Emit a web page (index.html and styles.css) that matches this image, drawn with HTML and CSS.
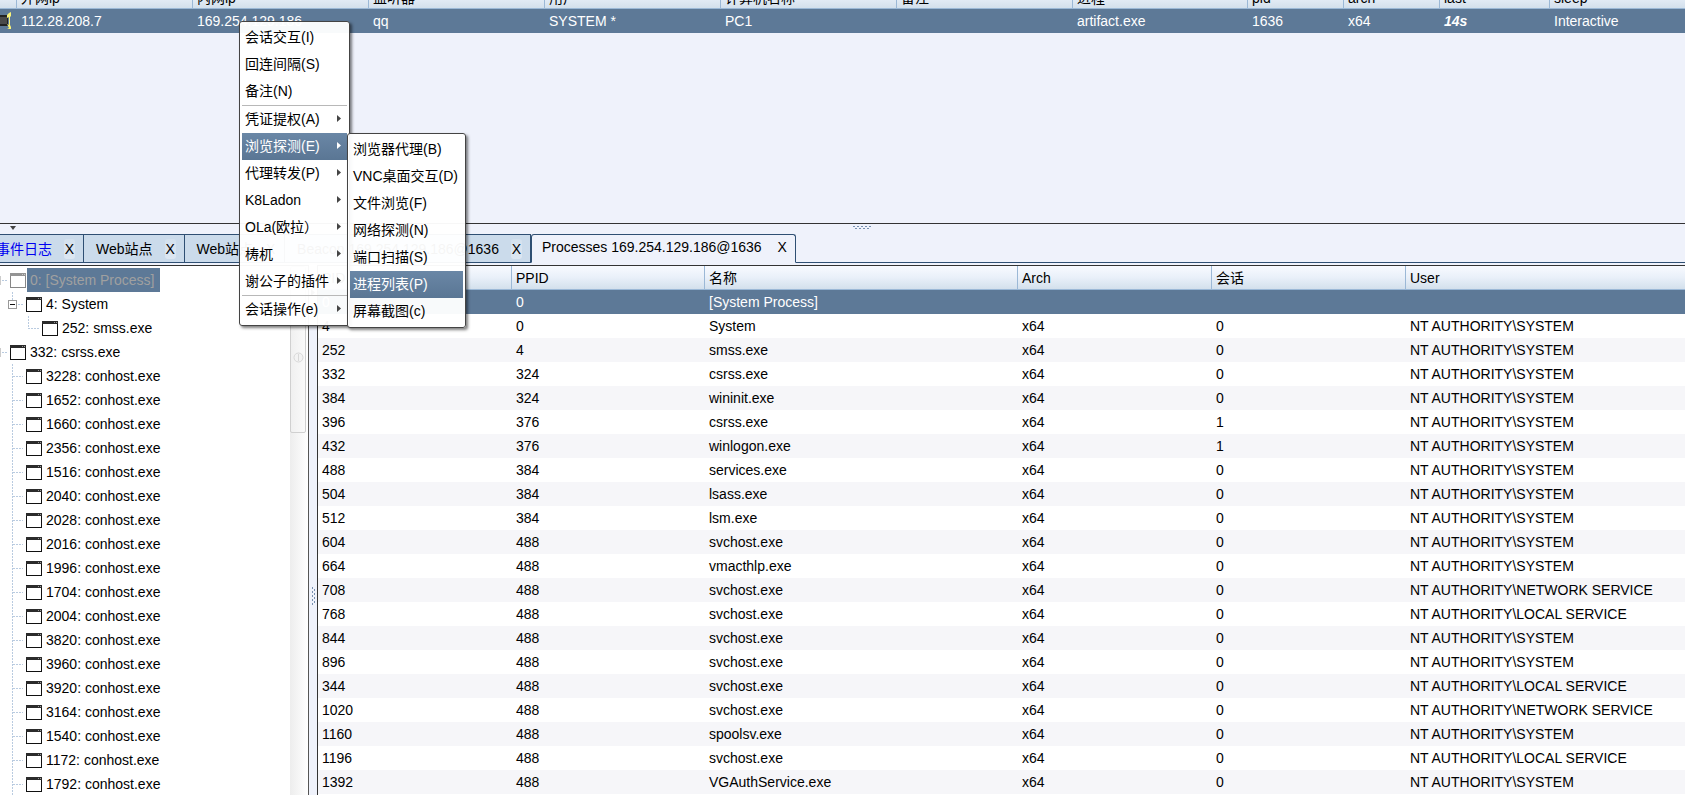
FILE: index.html
```html
<!DOCTYPE html>
<html lang="zh-CN">
<head>
<meta charset="utf-8">
<title>Processes 169.254.129.186@1636</title>
<link rel="stylesheet" href="styles.css">
</head>
<body>
<svg class="defs" aria-hidden="true">
  <symbol id="win" viewBox="0 0 16 15"><rect x=".5" y=".5" width="15" height="14" fill="#fff" stroke="#111"/><path d="M0 0h16v3H0z" fill="#2b2b2b"/><path d="M12 1h1v1h-1zM14 1h1v1h-1z" fill="#999"/></symbol>
  <symbol id="g0" viewBox="0 0 10 24"><path d="M0 8v9" stroke="#999" fill="none"/><path d="M2 12.5h6" stroke="#b9cbe0" stroke-dasharray="2 1" fill="none"/></symbol>
  <symbol id="g1e" viewBox="0 0 26 24"><path d="M12.5 0v8M18 12.5h6" stroke="#b9cbe0" stroke-dasharray="2 1" fill="none"/><rect x="8.500" y="8.500" width="8" height="8" fill="#fff" stroke="#999"/><path d="M10 12.500h5" stroke="#111"/></symbol>
  <symbol id="g1" viewBox="0 0 26 24"><path d="M12.500 0v24M13 12.500h10" stroke="#b9cbe0" stroke-dasharray="2 1" fill="none"/></symbol>
  <symbol id="g2" viewBox="0 0 42 24"><path d="M28.500 0v12M28 12.500h11" stroke="#b9cbe0" stroke-dasharray="2 1" fill="none"/></symbol>
  <symbol id="arr" viewBox="0 0 4 7"><path d="M0 0l4 3.500L0 7z" fill="currentColor"/></symbol>
</svg>

<main class="app">
  <section class="sessions">
    <table class="grid session-grid">
      <colgroup><col class="s-icon"><col class="s-wide"><col class="s-wide"><col class="s-wide"><col class="s-wide"><col class="s-wide"><col class="s-wide"><col class="s-proc"><col class="s-slim"><col class="s-slim"><col class="s-last"><col></colgroup>
      <thead><tr><th></th><th>外网ip</th><th>内网ip</th><th>监听器</th><th>用户</th><th>计算机名称</th><th>备注</th><th>进程</th><th>pid</th><th>arch</th><th>last</th><th>sleep</th></tr></thead>
      <tbody><tr class="selected"><td class="os"><svg width="12" height="18" viewBox="0 0 12 18" aria-hidden="true"><path d="M0 3h8v11H0z" fill="#222"/><path d="M0 5h7v7H0z" fill="#4a4a4a"/><path d="M11 0v4L9 6V5L7 6V3l2-2z" fill="#f8f27a"/><path d="M9 5h1v8H9z" fill="#f8f27a"/><path d="M7 12l2 1h1l1 2v2H7l2-1z" fill="#f8f27a"/></svg></td><td>112.28.208.7</td><td>169.254.129.186</td><td>qq</td><td>SYSTEM *</td><td>PC1</td><td></td><td>artifact.exe</td><td>1636</td><td>x64</td><td class="last">14s</td><td>Interactive</td></tr></tbody>
    </table>
  </section>

  <div class="split-h">
    <svg class="collapse" width="6" height="4" viewBox="0 0 6 4" aria-hidden="true"><path d="M0 0h6L3 4z" fill="#444"/></svg>
    <svg class="grip" width="18" height="3" viewBox="0 0 18 3" aria-hidden="true"><path d="M0 .5h18" stroke="#7790b0" stroke-dasharray="2 2"/><path d="M2 2.500h15" stroke="#7790b0" stroke-dasharray="2 2"/></svg>
  </div>

  <nav class="tabs">
    <div class="tab first"><button class="name blue">事件日志</button><button class="close">X</button></div>
    <div class="tab"><button class="name">Web站点</button><button class="close">X</button></div>
    <div class="tab"><button class="name">Web站点</button><button class="close">X</button></div>
    <div class="tab"><button class="name">Beacon 169.254.129.186@1636</button><button class="close">X</button></div>
    <div class="tab active"><button class="name">Processes 169.254.129.186@1636</button><button class="close">X</button></div>
    <div class="rest"></div>
  </nav>

  <section class="work">
    <div class="tree-pane">
      <ul class="tree">
        <li class="dim"><svg width="10" height="24"><use href="#g0"/></svg><svg class="win" width="16" height="15"><use href="#win"/></svg><span class="picked">0: [System Process]</span></li>
        <li><svg width="26" height="24"><use href="#g1e"/></svg><svg class="win" width="16" height="15"><use href="#win"/></svg><span>4: System</span></li>
        <li><svg width="42" height="24"><use href="#g2"/></svg><svg class="win" width="16" height="15"><use href="#win"/></svg><span>252: smss.exe</span></li>
        <li><svg width="10" height="24"><use href="#g0"/></svg><svg class="win" width="16" height="15"><use href="#win"/></svg><span>332: csrss.exe</span></li>
        <li><svg width="26" height="24"><use href="#g1"/></svg><svg class="win" width="16" height="15"><use href="#win"/></svg><span>3228: conhost.exe</span></li>
        <li><svg width="26" height="24"><use href="#g1"/></svg><svg class="win" width="16" height="15"><use href="#win"/></svg><span>1652: conhost.exe</span></li>
        <li><svg width="26" height="24"><use href="#g1"/></svg><svg class="win" width="16" height="15"><use href="#win"/></svg><span>1660: conhost.exe</span></li>
        <li><svg width="26" height="24"><use href="#g1"/></svg><svg class="win" width="16" height="15"><use href="#win"/></svg><span>2356: conhost.exe</span></li>
        <li><svg width="26" height="24"><use href="#g1"/></svg><svg class="win" width="16" height="15"><use href="#win"/></svg><span>1516: conhost.exe</span></li>
        <li><svg width="26" height="24"><use href="#g1"/></svg><svg class="win" width="16" height="15"><use href="#win"/></svg><span>2040: conhost.exe</span></li>
        <li><svg width="26" height="24"><use href="#g1"/></svg><svg class="win" width="16" height="15"><use href="#win"/></svg><span>2028: conhost.exe</span></li>
        <li><svg width="26" height="24"><use href="#g1"/></svg><svg class="win" width="16" height="15"><use href="#win"/></svg><span>2016: conhost.exe</span></li>
        <li><svg width="26" height="24"><use href="#g1"/></svg><svg class="win" width="16" height="15"><use href="#win"/></svg><span>1996: conhost.exe</span></li>
        <li><svg width="26" height="24"><use href="#g1"/></svg><svg class="win" width="16" height="15"><use href="#win"/></svg><span>1704: conhost.exe</span></li>
        <li><svg width="26" height="24"><use href="#g1"/></svg><svg class="win" width="16" height="15"><use href="#win"/></svg><span>2004: conhost.exe</span></li>
        <li><svg width="26" height="24"><use href="#g1"/></svg><svg class="win" width="16" height="15"><use href="#win"/></svg><span>3820: conhost.exe</span></li>
        <li><svg width="26" height="24"><use href="#g1"/></svg><svg class="win" width="16" height="15"><use href="#win"/></svg><span>3960: conhost.exe</span></li>
        <li><svg width="26" height="24"><use href="#g1"/></svg><svg class="win" width="16" height="15"><use href="#win"/></svg><span>3920: conhost.exe</span></li>
        <li><svg width="26" height="24"><use href="#g1"/></svg><svg class="win" width="16" height="15"><use href="#win"/></svg><span>3164: conhost.exe</span></li>
        <li><svg width="26" height="24"><use href="#g1"/></svg><svg class="win" width="16" height="15"><use href="#win"/></svg><span>1540: conhost.exe</span></li>
        <li><svg width="26" height="24"><use href="#g1"/></svg><svg class="win" width="16" height="15"><use href="#win"/></svg><span>1172: conhost.exe</span></li>
        <li><svg width="26" height="24"><use href="#g1"/></svg><svg class="win" width="16" height="15"><use href="#win"/></svg><span>1792: conhost.exe</span></li>
      </ul>
      <div class="track"><div class="thumb"><svg width="11" height="11" viewBox="0 0 11 11" aria-hidden="true"><circle cx="5.500" cy="5.500" r="4.500" fill="#f3f3f3" stroke="#d8d8d8"/><path d="M5.500 2v7" stroke="#d8d8d8"/></svg></div></div>
    </div>
    <div class="split-v">
      <svg width="4" height="7" aria-hidden="true"><use href="#arr"/></svg>
      <svg width="3" height="18" viewBox="0 0 3 18" aria-hidden="true"><path d="M.5 0v18" stroke="#7790b0" stroke-dasharray="2 2"/><path d="M2.500 2v16" stroke="#7790b0" stroke-dasharray="2 2"/></svg>
    </div>
    <div class="proc-pane">
      <table class="grid proc-grid">
        <colgroup><col class="p-id"><col class="p-id"><col class="p-name"><col class="p-mid"><col class="p-mid"><col></colgroup>
        <thead><tr><th>PID</th><th>PPID</th><th>名称</th><th>Arch</th><th>会话</th><th>User</th></tr></thead>
        <tbody>
          <tr class="selected"><td>0</td><td>0</td><td>[System Process]</td><td></td><td></td><td></td></tr>
          <tr><td>4</td><td>0</td><td>System</td><td>x64</td><td>0</td><td>NT AUTHORITY\SYSTEM</td></tr>
          <tr><td>252</td><td>4</td><td>smss.exe</td><td>x64</td><td>0</td><td>NT AUTHORITY\SYSTEM</td></tr>
          <tr><td>332</td><td>324</td><td>csrss.exe</td><td>x64</td><td>0</td><td>NT AUTHORITY\SYSTEM</td></tr>
          <tr><td>384</td><td>324</td><td>wininit.exe</td><td>x64</td><td>0</td><td>NT AUTHORITY\SYSTEM</td></tr>
          <tr><td>396</td><td>376</td><td>csrss.exe</td><td>x64</td><td>1</td><td>NT AUTHORITY\SYSTEM</td></tr>
          <tr><td>432</td><td>376</td><td>winlogon.exe</td><td>x64</td><td>1</td><td>NT AUTHORITY\SYSTEM</td></tr>
          <tr><td>488</td><td>384</td><td>services.exe</td><td>x64</td><td>0</td><td>NT AUTHORITY\SYSTEM</td></tr>
          <tr><td>504</td><td>384</td><td>lsass.exe</td><td>x64</td><td>0</td><td>NT AUTHORITY\SYSTEM</td></tr>
          <tr><td>512</td><td>384</td><td>lsm.exe</td><td>x64</td><td>0</td><td>NT AUTHORITY\SYSTEM</td></tr>
          <tr><td>604</td><td>488</td><td>svchost.exe</td><td>x64</td><td>0</td><td>NT AUTHORITY\SYSTEM</td></tr>
          <tr><td>664</td><td>488</td><td>vmacthlp.exe</td><td>x64</td><td>0</td><td>NT AUTHORITY\SYSTEM</td></tr>
          <tr><td>708</td><td>488</td><td>svchost.exe</td><td>x64</td><td>0</td><td>NT AUTHORITY\NETWORK SERVICE</td></tr>
          <tr><td>768</td><td>488</td><td>svchost.exe</td><td>x64</td><td>0</td><td>NT AUTHORITY\LOCAL SERVICE</td></tr>
          <tr><td>844</td><td>488</td><td>svchost.exe</td><td>x64</td><td>0</td><td>NT AUTHORITY\SYSTEM</td></tr>
          <tr><td>896</td><td>488</td><td>svchost.exe</td><td>x64</td><td>0</td><td>NT AUTHORITY\SYSTEM</td></tr>
          <tr><td>344</td><td>488</td><td>svchost.exe</td><td>x64</td><td>0</td><td>NT AUTHORITY\LOCAL SERVICE</td></tr>
          <tr><td>1020</td><td>488</td><td>svchost.exe</td><td>x64</td><td>0</td><td>NT AUTHORITY\NETWORK SERVICE</td></tr>
          <tr><td>1160</td><td>488</td><td>spoolsv.exe</td><td>x64</td><td>0</td><td>NT AUTHORITY\SYSTEM</td></tr>
          <tr><td>1196</td><td>488</td><td>svchost.exe</td><td>x64</td><td>0</td><td>NT AUTHORITY\LOCAL SERVICE</td></tr>
          <tr><td>1392</td><td>488</td><td>VGAuthService.exe</td><td>x64</td><td>0</td><td>NT AUTHORITY\SYSTEM</td></tr>
        </tbody>
      </table>
    </div>
  </section>
</main>

<div class="menu main-menu" role="menu">
  <button role="menuitem">会话交互(I)</button>
  <button role="menuitem">回连间隔(S)</button>
  <button role="menuitem">备注(N)</button>
  <hr>
  <button role="menuitem">凭证提权(A)<svg width="4" height="7"><use href="#arr"/></svg></button>
  <button role="menuitem" class="on">浏览探测(E)<svg width="4" height="7"><use href="#arr"/></svg></button>
  <button role="menuitem">代理转发(P)<svg width="4" height="7"><use href="#arr"/></svg></button>
  <button role="menuitem">K8Ladon<svg width="4" height="7"><use href="#arr"/></svg></button>
  <button role="menuitem">OLa(欧拉）<svg width="4" height="7"><use href="#arr"/></svg></button>
  <button role="menuitem">梼杌<svg width="4" height="7"><use href="#arr"/></svg></button>
  <button role="menuitem">谢公子的插件<svg width="4" height="7"><use href="#arr"/></svg></button>
  <hr>
  <button role="menuitem">会话操作(e)<svg width="4" height="7"><use href="#arr"/></svg></button>
</div>
<div class="menu sub-menu" role="menu">
  <button role="menuitem">浏览器代理(B)</button>
  <button role="menuitem">VNC桌面交互(D)</button>
  <button role="menuitem">文件浏览(F)</button>
  <button role="menuitem">网络探测(N)</button>
  <button role="menuitem">端口扫描(S)</button>
  <button role="menuitem" class="on">进程列表(P)</button>
  <button role="menuitem">屏幕截图(c)</button>
</div>
</body>
</html>
```
FILE: styles.css
```css
* { box-sizing: border-box; }
html, body { height: 100%; margin: 0; overflow: hidden; }
body, button {
  font-family: "Liberation Sans", "Noto Sans CJK SC", sans-serif;
  font-size: 14px;
  line-height: 20px;
  color: #000;
}
body { background: #eff2fb; }
button { border: 0; padding: 0; background: none; text-align: left; white-space: nowrap; }
.defs { position: absolute; width: 0; height: 0; }

.app {
  display: grid;
  grid-template-rows: 223px auto auto minmax(0, 1fr);
  height: 100vh;
}

/* data grids */
.grid { width: 100%; table-layout: fixed; border-collapse: separate; border-spacing: 0; }
.grid th {
  height: 24px;
  padding: 0 4px;
  font-weight: normal;
  text-align: left;
  line-height: 20px;
  white-space: nowrap;
  background: linear-gradient(#f8faff, #e9f0f9 50%, #d3e0ec);
  border-bottom: 1px solid #9bb8d6;
  border-left: 1px solid #9bb8d6;
}
.grid th:first-child { border-left: 0; }
.grid td { height: 24px; padding: 0 5px; white-space: nowrap; overflow: hidden; line-height: 20px; }
.grid td:first-child { padding-left: 4px; }
.grid .selected td { background: #5d7997; color: #fff; }

.sessions { overflow: hidden; }
.session-grid { margin-top: -16px; }
.session-grid th { height: 25px; padding-top: 3px; }
.grid td.os { padding: 0; }
.os svg { display: block; }
.last { font-weight: bold; font-style: italic; }
.s-icon { width: 16px; }
.s-wide { width: 176px; }
.s-proc { width: 175px; }
.s-slim { width: 96px; }
.s-last { width: 110px; }

/* splitters */
.split-h {
  display: flex;
  align-items: flex-start;
  height: 11px;
  padding: 2px 10px;
  border-top: 1px solid #333;
}
.split-h .collapse { margin-right: auto; }
.split-h .grip { margin-left: 32px; margin-right: auto; }
.split-v {
  display: flex;
  flex-direction: column;
  align-items: center;
  justify-content: space-between;
  padding: 24px 0 190px;
  color: #444;
}

/* tabs */
.tabs { display: flex; height: 31px; padding-bottom: 2px; }
.tab {
  display: flex;
  align-items: center;
  gap: 12px;
  padding: 0 8px 0 12px;
  background: #cbdbeb;
  border: 1px solid #2f4f73;
  border-left-width: 0;
}
.tab .close {
  width: 11px;
  text-align: center;
  background: linear-gradient(#d4e1ee, #dde7f2);
  border-radius: 3px;
}
.tab.first { padding-left: 0; }
.tab.first .name { margin-left: -4px; }
.tab .blue { color: #0000f0; }
.tab.active {
  gap: 15px;
  padding: 0 7px 4px 10px;
  background: #eff2fb;
  border-left-width: 1px;
  border-bottom-color: #eff2fb;
  border-radius: 3px 3px 0 0;
}
.active .close { background: none; }
.rest { flex: 1; border-bottom: 1px solid #2f4f73; }

.work {
  display: grid;
  grid-template-columns: 309px 8px minmax(0, 1fr);
  min-height: 0;
}
.tree-pane {
  display: flex;
  min-height: 0;
  overflow: hidden;
  background: #fff;
  border-top: 1px solid #333;
  border-right: 1px solid #555;
}
.tree { flex: 1; margin: 0; padding: 2px 0 0; list-style: none; }
.tree li { display: flex; align-items: center; height: 24px; }
.tree svg { flex: none; }
.tree span { margin-left: 1px; padding: 0 6px 0 3px; line-height: 24px; }
.tree .picked { background: #5d7997; color: #a0a0a0; }
.dim .win { opacity: .5; }
.track { width: 18px; background: linear-gradient(90deg, #ededed, #fff); }
.thumb {
  display: flex;
  align-items: flex-end;
  justify-content: center;
  width: 16px;
  height: 167px;
  padding-bottom: 69px;
  background: linear-gradient(90deg, #f0f0f0, #fafafa);
  border: 1px solid #d0d0d0;
  border-radius: 2px;
}

.proc-pane {
  overflow: hidden;
  background: #fff;
  border-top: 1px solid #333;
  border-left: 1px solid #333;
}
.p-id { width: 193px; }
.p-mid { width: 194px; }
.p-name { width: 313px; }
.proc-grid tbody tr:nth-child(odd) { background: #f6f6f9; }

/* context menus float over the window */
.menu {
  position: absolute;
  display: flex;
  flex-direction: column;
  padding: 2px;
  background: rgba(255, 255, 255, .96);
  border: 1px solid #444;
  border-radius: 3px;
  box-shadow: 2px 2px 3px rgba(0, 0, 0, .5);
}
.menu button {
  display: flex;
  align-items: center;
  justify-content: space-between;
  height: 27px;
  padding: 0 6px 2px 3px;
}
.menu svg { color: #444; }
.menu .on { color: #fff; background: linear-gradient(#6a87a6, #5a7694); }
.menu .on svg { color: #fff; }
.menu hr { width: 100%; height: 1px; margin: 0; border: 0; background: #b8b8b8; }
.main-menu { top: 21px; left: 239px; width: 111px; }
.sub-menu { top: 133px; left: 347px; width: 119px; }
```
